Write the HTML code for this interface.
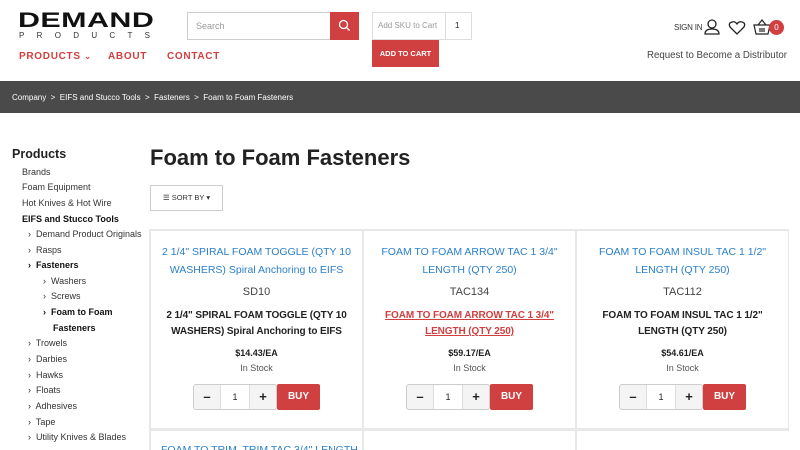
<!DOCTYPE html>
<html><head><meta charset="utf-8"><style>
*{box-sizing:border-box;margin:0;padding:0}
html,body{width:800px;height:450px;overflow:hidden}
body{background:#fff;font-family:"Liberation Sans",sans-serif;color:#222;position:relative}
.a{position:absolute;white-space:nowrap}
.logo{left:18px;top:9px;font-weight:900;font-size:21px;letter-spacing:0.3px;color:#111;transform:scaleX(1.45);transform-origin:left;}
.sub{left:19px;top:31px;font-size:8px;letter-spacing:12.3px;color:#333}
.nav{top:51px;font-size:10px;font-weight:bold;letter-spacing:0.7px;color:#d04040}
.search{left:187px;top:12px;width:172px;height:28px;border:1px solid #ccc}
.search span{position:absolute;left:8px;top:8px;font-size:9px;color:#999}
.sbtn{position:absolute;right:-1px;top:-1px;width:29px;height:28px;background:#d04040}
.sku{left:372px;top:12px;width:100px;height:28px;border:1px solid #ddd}
.bc{left:0;top:81px;width:800px;height:32px;background:#4a4a4a;color:#fff;font-size:8px;padding:12px 12px}
.side{left:22px;font-size:9px;color:#333}
.card{position:absolute;background:#fff;text-align:center;width:211px;height:197px;overflow:hidden}
.ct{color:#2a7fc9;font-size:10.5px;line-height:18px;margin-top:12px;padding:0 10px}
.sku2{font-size:11px;color:#444;margin-top:7px}
.nm{font-weight:bold;font-size:10px;letter-spacing:-0.1px;line-height:16px;margin-top:10px;padding:0 10px}
.pr{font-weight:bold;font-size:9px;margin-top:8px}
.st{font-size:9px;color:#555;margin-top:5px}
.qty{position:absolute;left:42px;top:153px;width:84px;height:26px;border:1px solid #ccc;border-radius:3px;background:#f4f4f4}
.qty div{position:absolute;top:0;height:24px;text-align:center;line-height:24px;font-weight:bold;font-size:13px}
.qty .l{left:0;width:26px}.qty .r{right:0;width:26px}
.qty .m{left:26px;width:30px;background:#fff;font-weight:normal;font-size:9px;border-left:1px solid #ddd;border-right:1px solid #ddd}
.buy{position:absolute;left:126px;top:153px;width:43px;height:26px;background:#d04040;color:#fff;font-weight:bold;font-size:10px;line-height:26px;border-radius:2px}
</style></head><body>
<div class="a logo">DEMAND</div>
<div class="a sub">PRODUCTS</div>
<div class="a nav" style="left:19px">PRODUCTS <span style="font-size:8px">⌄</span></div>
<div class="a nav" style="left:108px">ABOUT</div>
<div class="a nav" style="left:167px">CONTACT</div>
<div class="a search"><span>Search</span><div class="sbtn"><svg width="29" height="28"><circle cx="13.5" cy="12.5" r="4" fill="none" stroke="#fff" stroke-width="1.3"/><line x1="16.5" y1="15.5" x2="19.5" y2="18.5" stroke="#fff" stroke-width="1.3"/></svg></div></div>
<div class="a sku"><span style="position:absolute;left:5px;top:8px;font-size:8px;color:#999">Add SKU to Cart</span><div style="position:absolute;left:72px;top:0;width:1px;height:26px;background:#ddd"></div><span style="position:absolute;left:82px;top:8px;font-size:8px">1</span></div>
<div class="a" style="left:372px;top:40px;width:67px;height:27px;background:#d04040;color:#fff;font-size:7.5px;font-weight:bold;text-align:center;line-height:27px">ADD TO CART</div>
<div class="a" style="left:674px;top:23px;font-size:8px;letter-spacing:-0.2px;color:#333">SIGN IN</div>
<svg class="a" style="left:703px;top:18px" width="18" height="18"><circle cx="9" cy="6" r="4" fill="none" stroke="#222" stroke-width="1.3"/><path d="M2 16 Q2 11 9 11 Q16 11 16 16 Z" fill="none" stroke="#222" stroke-width="1.3"/></svg>
<svg class="a" style="left:728px;top:20px" width="18" height="16"><path d="M9 14 L2 7 Q0 3 4 2 Q7 1 9 4 Q11 1 14 2 Q18 3 16 7 Z" fill="none" stroke="#222" stroke-width="1.3"/></svg>
<svg class="a" style="left:753px;top:18px" width="18" height="18"><path d="M1 7 H17 L15 16 H3 Z M5 7 L9 2 L13 7 M7 10 V14 M9 10 V14 M11 10 V14" fill="none" stroke="#222" stroke-width="1.2"/></svg>
<div class="a" style="left:769px;top:20px;width:15px;height:15px;border-radius:50%;background:#d04040;color:#fff;font-size:8px;text-align:center;line-height:15px">0</div>
<div class="a" style="left:647px;top:50px;font-size:9.7px;color:#444">Request to Become a Distributor</div>
<div class="a bc">Company &nbsp;&gt;&nbsp; EIFS and Stucco Tools &nbsp;&gt;&nbsp; Fasteners &nbsp;&gt;&nbsp; Foam to Foam Fasteners</div>
<div class="a" style="left:12px;top:147px;font-size:12.5px;font-weight:bold">Products</div>
<div class="a side" style="top:167px">Brands</div>
<div class="a side" style="top:182px">Foam Equipment</div>
<div class="a side" style="top:198px">Hot Knives &amp; Hot Wire</div>
<div class="a side" style="top:214px;font-weight:bold;color:#111">EIFS and Stucco Tools</div>
<div class="a side" style="top:229px;left:28px">›&nbsp; Demand Product Originals</div>
<div class="a side" style="top:245px;left:28px">›&nbsp; Rasps</div>
<div class="a side" style="top:260px;left:28px;font-weight:bold;color:#111">›&nbsp; Fasteners</div>
<div class="a side" style="top:276px;left:43px">›&nbsp; Washers</div>
<div class="a side" style="top:291px;left:43px">›&nbsp; Screws</div>
<div class="a side" style="top:307px;left:43px;font-weight:bold;color:#111">›&nbsp; Foam to Foam</div>
<div class="a side" style="top:323px;left:53px;font-weight:bold;color:#111">Fasteners</div>
<div class="a side" style="top:338px;left:28px">›&nbsp; Trowels</div>
<div class="a side" style="top:354px;left:28px">›&nbsp; Darbies</div>
<div class="a side" style="top:370px;left:28px">›&nbsp; Hawks</div>
<div class="a side" style="top:385px;left:28px">›&nbsp; Floats</div>
<div class="a side" style="top:401px;left:28px">›&nbsp; Adhesives</div>
<div class="a side" style="top:417px;left:28px">›&nbsp; Tape</div>
<div class="a side" style="top:432px;left:28px">›&nbsp; Utility Knives &amp; Blades</div>
<div class="a" style="left:150px;top:145px;font-size:22px;font-weight:bold;color:#222">Foam to Foam Fasteners</div>
<div class="a" style="left:150px;top:185px;width:73px;height:26px;border:1px solid #ccc;font-size:7.5px;line-height:24px;text-align:center;color:#333">☰ SORT BY ▾</div>
<div class="a" style="left:149px;top:229px;width:640px;height:221px;background:#e8e8e8"></div>
<div class="card" style="left:151px;top:231px"><div class="ct">2 1/4" SPIRAL FOAM TOGGLE (QTY 10 WASHERS) Spiral Anchoring to EIFS</div><div class="sku2">SD10</div><div class="nm">2 1/4" SPIRAL FOAM TOGGLE (QTY 10 WASHERS) Spiral Anchoring to EIFS</div><div class="pr">$14.43/EA</div><div class="st">In Stock</div><div class="qty"><div class="l">–</div><div class="m">1</div><div class="r">+</div></div><div class="buy">BUY</div></div>
<div class="card" style="left:364px;top:231px"><div class="ct">FOAM TO FOAM ARROW TAC 1 3/4" LENGTH (QTY 250)</div><div class="sku2">TAC134</div><div class="nm" style="color:#d04040;text-decoration:underline">FOAM TO FOAM ARROW TAC 1 3/4" LENGTH (QTY 250)</div><div class="pr">$59.17/EA</div><div class="st">In Stock</div><div class="qty"><div class="l">–</div><div class="m">1</div><div class="r">+</div></div><div class="buy">BUY</div></div>
<div class="card" style="left:577px;top:231px"><div class="ct">FOAM TO FOAM INSUL TAC 1 1/2" LENGTH (QTY 250)</div><div class="sku2">TAC112</div><div class="nm">FOAM TO FOAM INSUL TAC 1 1/2" LENGTH (QTY 250)</div><div class="pr">$54.61/EA</div><div class="st">In Stock</div><div class="qty"><div class="l">–</div><div class="m">1</div><div class="r">+</div></div><div class="buy">BUY</div></div>
<div class="card" style="left:151px;top:431px;height:19px"><div class="ct" style="margin-top:10px;white-space:nowrap">FOAM TO TRIM, TRIM TAC 3/4" LENGTH</div></div>
<div class="card" style="left:364px;top:431px;height:19px"></div>
<div class="a" style="left:577px;top:431px;width:223px;height:19px;background:#fff"></div>
</body></html>
